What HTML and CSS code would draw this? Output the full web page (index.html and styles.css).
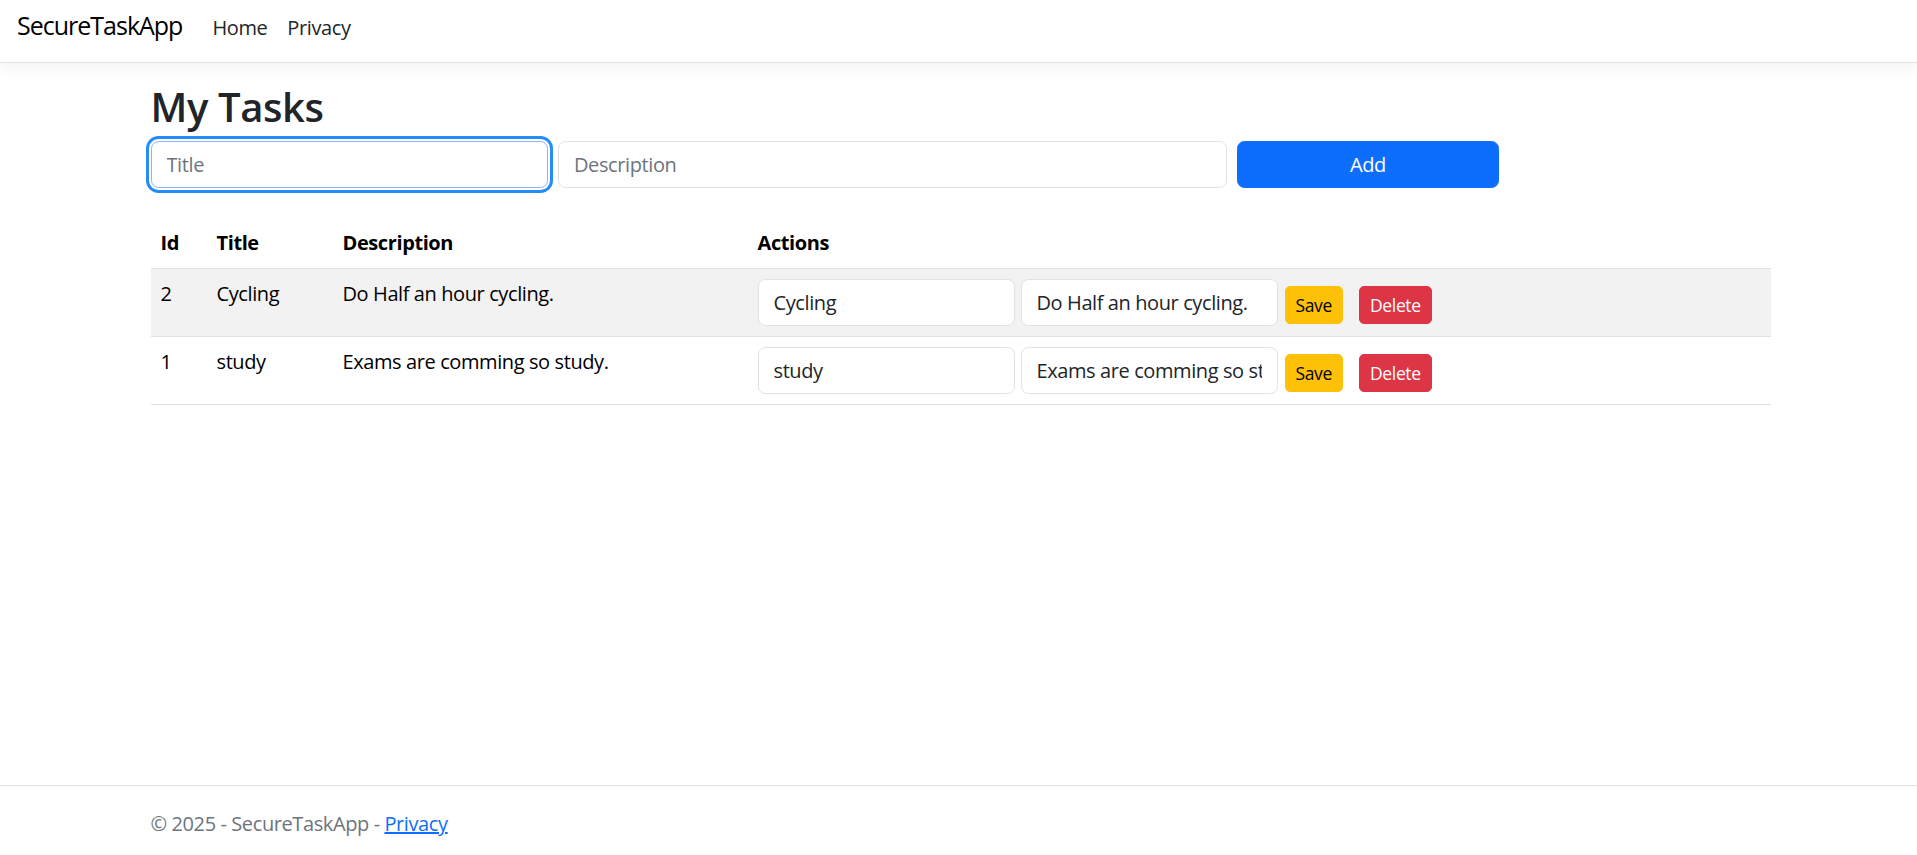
FILE: index.html
```html
<!DOCTYPE html>
<html lang="en">
<head>
<meta charset="utf-8">
<title>SecureTaskApp</title>
<link rel="stylesheet" href="styles.css">
</head>
<body>
<header>
  <nav class="navbar">
    <div class="navbar-inner">
      <a class="brand" href="#">SecureTaskApp</a>
      <ul class="nav">
        <li><a class="nav-link" href="#">Home</a></li>
        <li><a class="nav-link" href="#">Privacy</a></li>
      </ul>
    </div>
  </nav>
</header>
<main class="container">
  <h2 class="page-title">My Tasks</h2>
  <form class="add-form row">
    <div class="col col-3"><input class="form-control is-focused" type="text" placeholder="Title"></div>
    <div class="col col-5"><input class="form-control" type="text" placeholder="Description"></div>
    <div class="col col-2"><button class="btn btn-primary btn-block" type="button">Add</button></div>
  </form>
  <table class="table">
    <colgroup>
      <col class="c-id"><col class="c-title"><col class="c-desc"><col>
    </colgroup>
    <thead>
      <tr><th>Id</th><th>Title</th><th>Description</th><th>Actions</th></tr>
    </thead>
    <tbody>
      <tr class="striped">
        <td>2</td>
        <td>Cycling</td>
        <td>Do Half an hour cycling.</td>
        <td>
          <div class="actions">
            <input class="form-control action-input" type="text" value="Cycling">
            <input class="form-control action-input" type="text" value="Do Half an hour cycling.">
            <button class="btn btn-sm btn-warning" type="button">Save</button>
            <button class="btn btn-sm btn-danger" type="button">Delete</button>
          </div>
        </td>
      </tr>
      <tr>
        <td>1</td>
        <td>study</td>
        <td>Exams are comming so study.</td>
        <td>
          <div class="actions">
            <input class="form-control action-input" type="text" value="study">
            <input class="form-control action-input" type="text" value="Exams are comming so study.">
            <button class="btn btn-sm btn-warning" type="button">Save</button>
            <button class="btn btn-sm btn-danger" type="button">Delete</button>
          </div>
        </td>
      </tr>
    </tbody>
  </table>
</main>
<footer class="footer">
  <div class="container">&copy; 2025 - SecureTaskApp - <a href="#">Privacy</a></div>
</footer>
</body>
</html>
```

FILE: styles.css
```css
* { box-sizing: border-box; }

html, body { height: 100%; }

body {
  margin: 0;
  font-family: "Segoe UI", "Open Sans", "Noto Sans", sans-serif;
  font-size: 20px;
  line-height: 1.5;
  letter-spacing: -0.02em;
  color: #212529;
  background: #fff;
  display: flex;
  flex-direction: column;
  min-height: 100vh;
}

a { color: #0d6efd; }

/* navbar */
.navbar {
  height: 63px;
  background: #fff;
  border-bottom: 1px solid #dee2e6;
  box-shadow: 0 5px 15px rgba(0, 0, 0, 0.05);
  margin-bottom: 20px;
  position: relative;
  z-index: 1;
}
.navbar-inner {
  display: flex;
  align-items: baseline;
  padding: 7px 15px 0 17px;
}
.brand {
  font-size: 25px;
  line-height: 37.5px;
  letter-spacing: -0.04em;
  color: #000;
  text-decoration: none;
  margin-right: 20px;
}
.nav {
  display: flex;
  list-style: none;
  margin: 0;
  padding: 0;
}
.nav-link {
  display: block;
  padding: 0 10px;
  color: #212529;
  text-decoration: none;
  line-height: 30px;
}

/* main */
.container {
  width: 1620px;
  margin: 0 auto;
  position: relative;
  left: 2px;
}
main.container { flex: 1; }

.page-title {
  font-size: 40px;
  font-weight: 600;
  line-height: 1.2;
  letter-spacing: -0.01em;
  margin: 0 0 10px;
  color: #212529;
}

.row {
  display: flex;
  margin: 0 -5px;
}
.col { padding: 0 5px; flex: 0 0 auto; }
.col-3 { width: 25%; }
.col-5 { width: 41.6667%; }
.col-2 { width: 16.6667%; }

.add-form { margin-bottom: 30px; }

.form-control {
  display: block;
  width: 100%;
  height: 47px;
  padding: 7.5px 15px;
  font-family: inherit;
  font-size: 20px;
  line-height: 30px;
  letter-spacing: -0.02em;
  color: #212529;
  background: #fff;
  border: 1px solid #dee2e6;
  border-radius: 7.5px;
  outline: none;
}
.form-control::placeholder { color: #6c757d; opacity: 1; }
.form-control.is-focused {
  border-color: #86b7fe;
  box-shadow: 0 0 0 2px #fff, 0 0 0 5px #258cfb;
}

.btn {
  display: inline-block;
  font-family: inherit;
  font-size: 20px;
  line-height: 30px;
  letter-spacing: -0.02em;
  padding: 7.5px 15px;
  border: 1px solid transparent;
  border-radius: 7.5px;
  cursor: pointer;
  text-align: center;
}
.btn-block { width: 100%; height: 47px; }
.btn-primary { background: #0d6efd; border-color: #0d6efd; color: #fff; }
.btn-sm {
  font-size: 17.5px;
  line-height: 26.25px;
  padding: 5px 10px;
  border-radius: 5px;
}
.btn-warning { background: #ffc107; border-color: #ffc107; color: #000; }
.btn-danger { background: #dc3545; border-color: #dc3545; color: #fff; }

/* table */
.table {
  width: 100%;
  border-collapse: collapse;
  table-layout: fixed;
  color: #000;
  margin-bottom: 20px;
}
.c-id { width: 56px; }
.c-title { width: 126px; }
.c-desc { width: 415px; }
.table th, .table td {
  padding: 10px;
  border-bottom: 1px solid #dee2e6;
  text-align: left;
  vertical-align: top;
}
.table th { font-weight: 700; vertical-align: bottom; }
.table tr.striped > td { background: #f2f2f2; }

.actions {
  display: flex;
  align-items: flex-start;
}
.action-input {
  width: 257px;
  margin-right: 6px;
  flex: 0 0 auto;
}
.actions .action-input + .action-input { margin-right: 7px; }
.actions .btn-sm { margin-top: 7px; }
.actions .btn-danger { margin-left: 16px; }

/* footer */
.footer {
  border-top: 1px solid #dee2e6;
  color: #6c757d;
  padding: 23px 0 16px;
  white-space: nowrap;
}
```
